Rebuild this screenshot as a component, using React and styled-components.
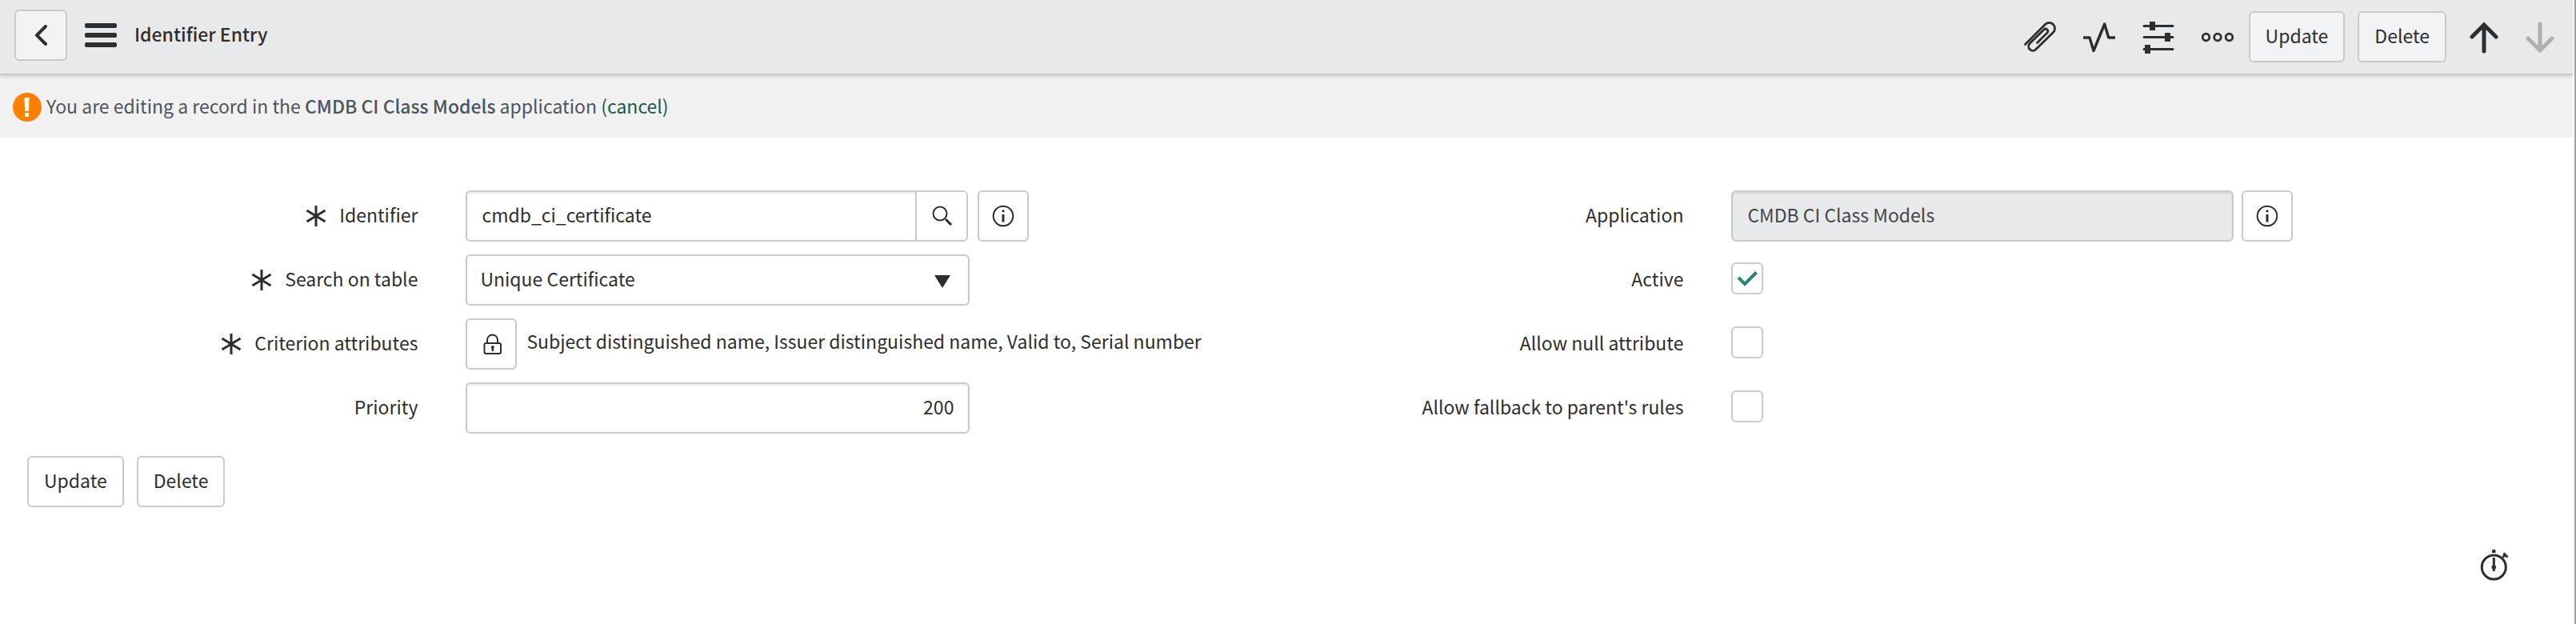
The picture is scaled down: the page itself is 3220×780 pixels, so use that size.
import React from 'react';
import styled, { createGlobalStyle, css } from 'styled-components';

const Global = createGlobalStyle`
  *, *::before, *::after { box-sizing: border-box; }
  body { margin: 0; background: #fff; }
  body, button, input, select {
    font-family: "Noto Sans CJK SC", "Noto Sans", sans-serif;
    font-size: 23px;
    line-height: 36px;
    color: #2e2e2e;
  }
`;

const Page = styled.div`
  min-height: 100vh;
  display: flex;
  flex-direction: column;
  padding-right: 2px;
  border-right: 2px solid #a3a3a3;
`;

const Header = styled.header`
  display: flex;
  align-items: center;
  height: 94px;
  padding: 0 6px 4px 18px;
  background: #e7e9eb;
  border-bottom: 2px solid #c8c8c8;
  box-shadow: 0 2px 4px rgba(0, 0, 0, 0.12);
  z-index: 1;
`;

const frame = css`
  border: 2px solid #cacaca;
  border-radius: 6px;
  background: #fff;
`;

const Button = styled.button`
  ${frame}
  height: 64px;
  padding: 0 19px 4px;
  background: ${(p) => (p.$tinted ? '#f2f3f5' : '#fff')};
`;

const IconButton = styled(Button)`
  display: flex;
  flex: none;
  align-items: center;
  justify-content: center;
  width: ${(p) => p.$width || 64}px;
  padding: 0;
`;

const BareButton = styled.button`
  display: flex;
  align-items: center;
  justify-content: center;
  width: ${(p) => p.$width || 74}px;
  height: 64px;
  padding: 0;
  border: 0;
  background: none;
  color: inherit;
  opacity: ${(p) => (p.disabled ? 0.3 : 1)};
`;

const Title = styled.h1`
  flex: 1;
  margin: 0;
  padding-bottom: 4px;
  font-size: 23px;
  font-weight: 500;
`;

const Tools = styled.div`
  display: flex;
  align-items: center;
  margin-top: 4px;
`;

const ToolButtons = styled.div`
  display: flex;
  gap: 16px;
  padding: 0 12px 0 2px;
`;

const Notice = styled.div`
  display: flex;
  align-items: center;
  gap: 6px;
  height: 78px;
  padding: 2px 16px 0;
  background: #f1f1f1;
  color: #4d5560;
`;

const NoticeText = styled.p`
  margin: 0;
  padding-bottom: 4px;
  strong { font-weight: 500; }
`;

const Link = styled.a`
  color: #1a5a48;
  text-decoration: none;
`;

const Form = styled.form`
  display: grid;
  grid-template-columns: 1fr 1fr;
  padding: 66px 20px 0 32px;
`;

const Column = styled.div`
  display: flex;
  flex-direction: column;
  gap: 16px;
`;

const Row = styled.div`
  display: grid;
  grid-template-columns: 31% 1fr;
  column-gap: 60px;
  align-items: center;
  min-height: 64px;
`;

const Label = styled.label`
  display: flex;
  align-items: center;
  justify-content: flex-end;
  gap: 16px;
`;

const LabelText = styled.span`
  padding-bottom: 4px;
`;

const ValueText = styled.span`
  padding-bottom: 8px;
`;

const Control = styled.div`
  display: flex;
  align-items: center;
  gap: ${(p) => p.$gap || 12}px;
  width: ${(p) => p.$width || 'auto'};
`;

const Group = styled.div`
  display: flex;
  flex: 1;
`;

const TextInput = styled.input`
  ${frame}
  flex: 1;
  min-width: 0;
  height: 64px;
  padding: 0 18px 4px;
  box-shadow: inset 0 2px 2px rgba(0, 0, 0, 0.08);
  text-align: ${(p) => p.$align || 'left'};
  ${(p) => p.$joined && css`border-radius: 6px 0 0 6px; border-right: 0;`}
  &:disabled { background: #e7e9eb; color: #464646; }
`;

const LookupButton = styled(IconButton)`
  border-radius: 0 6px 6px 0;
`;

const SelectBox = styled.div`
  display: grid;
  flex: 1;
  align-items: center;
  svg { grid-area: 1 / 1; justify-self: end; margin: 4px 24px 0 0; pointer-events: none; }
`;

const Select = styled.select`
  ${frame}
  grid-area: 1 / 1;
  appearance: none;
  width: 100%;
  height: 64px;
  padding: 0 16px 4px;
`;

const CheckBox = styled.span`
  display: grid;
  place-items: center;
  margin-bottom: 4px;
  svg { grid-area: 1 / 1; pointer-events: none; visibility: hidden; }
  input:checked + svg { visibility: visible; }
`;

const CheckInput = styled.input`
  ${frame}
  grid-area: 1 / 1;
  appearance: none;
  width: 40px;
  height: 40px;
  margin: 0;
`;

const Actions = styled.div`
  display: flex;
  gap: 16px;
  padding: 28px 34px 0;
`;

const Footer = styled.footer`
  display: flex;
  justify-content: flex-end;
  padding: 40px 80px 0;
`;

const ink = '#2e2e2e';

const Svg = ({ w, h, sw = 2, children }) => (
  <svg width={w} height={h} viewBox={`0 0 ${w} ${h}`} fill="none" stroke={ink} strokeWidth={sw} aria-hidden="true">{children}</svg>
);

const BackIcon = () => (
  <Svg w={16} h={26} sw={4}><path d="M14 2L3 13l11 11" strokeLinecap="round" strokeLinejoin="round" /></Svg>
);

const MenuIcon = () => (
  <svg width="40" height="30" viewBox="0 0 40 30" fill={ink} aria-hidden="true">
    <rect width="40" height="6" rx="2" /><rect y="12" width="40" height="6" rx="2" /><rect y="24" width="40" height="6" rx="2" />
  </svg>
);

const PaperclipIcon = () => (
  <Svg w={40} h={40} sw={2.8}>
    <path
      d="M1.5 29.5L26.5 4.5a7.07 7.07 0 0 1 10 10L14.8 35.8a5.3 5.3 0 0 1-7.5-7.5L25 11a2.83 2.83 0 0 1 4 4L16.5 27.5"
      strokeLinecap="round"
      strokeLinejoin="round"
    />
  </Svg>
);

const ActivityIcon = () => (
  <Svg w={40} h={40} sw={3.4}><path d="M0 21h8l5 16.5L26.7 4l5 17H40" strokeLinejoin="round" /></Svg>
);

const SlidersIcon = () => (
  <Svg w={40} h={42} sw={3}>
    <path d="M2 7.5h36M2 21.5h36M2 36.5h36" strokeLinecap="round" />
    <path d="M9 2h7v11h-7zM28 16h7v11h-7zM3 31h7v11h-7z" fill={ink} stroke="none" />
  </Svg>
);

const MoreIcon = () => (
  <Svg w={40} h={40} sw={2.8}><circle cx="5.5" cy="20.5" r="4.3" /><circle cx="20" cy="20.5" r="4.3" /><circle cx="34.5" cy="20.5" r="4.3" /></Svg>
);

const UpIcon = () => (
  <Svg w={36} h={42} sw={5}><path d="M18 39V6M3 21L18 6l15 15" strokeLinecap="round" /></Svg>
);

const DownIcon = () => (
  <Svg w={36} h={42} sw={5}><path d="M18 5v33M3 23l15 15 15-15" strokeLinecap="round" /></Svg>
);

const WarningIcon = () => (
  <svg width="36" height="36" viewBox="0 0 36 36" aria-hidden="true">
    <circle cx="18" cy="18" r="18" fill="#ff8000" />
    <path d="M14.5 6h6l-.5 17h-5zM15 25h5v5h-5z" fill="#fff" />
  </svg>
);

const Asterisk = () => (
  <Svg w={26} h={26} sw={3}><path d="M13 0v26M1.5 6l23 14M24.5 6l-23 14" /></Svg>
);

const SearchIcon = () => (
  <Svg w={26} h={26}><circle cx="11" cy="10" r="8.5" /><path d="M18 17l7 7" strokeWidth="3" /></Svg>
);

const InfoIcon = () => (
  <Svg w={28} h={28}>
    <circle cx="14" cy="14" r="12.3" />
    <path d="M14 12v9.5" strokeWidth="3" />
    <circle cx="14" cy="7.8" r="1.6" fill={ink} stroke="none" />
  </Svg>
);

const LockIcon = () => (
  <Svg w={26} h={26}>
    <rect x="4.5" y="12" width="20.5" height="13" rx="2" />
    <path d="M8 12V8a6.5 6.5 0 0 1 13 0v4" />
    <circle cx="14.8" cy="17" r="2" fill={ink} stroke="none" />
    <path d="M14.8 17v5" strokeWidth="2.4" />
  </Svg>
);

const StopwatchIcon = () => (
  <Svg w={36} h={40} sw={3}>
    <circle cx="17.3" cy="23" r="15" />
    <path d="M17.3 11v17" />
    <circle cx="17.3" cy="23" r="2.8" fill={ink} stroke="none" />
    <path d="M15 5V3a2.3 2.3 0 0 1 4.6 0v2z" fill={ink} stroke="none" />
    <path d="M28.5 10.5l3-3M29.5 5.5l5 5" />
  </Svg>
);

const Field = ({ id, label, required, width, gap, children }) => (
  <Row>
    <Label htmlFor={id}>{required && <Asterisk />}<LabelText>{label}</LabelText></Label>
    <Control $width={width} $gap={gap}>{children}</Control>
  </Row>
);

const Check = ({ id, checked }) => (
  <CheckBox>
    <CheckInput type="checkbox" id={id} defaultChecked={checked} />
    <svg width="26" height="20" viewBox="0 0 26 20" fill="none" stroke="#278372" strokeWidth="4" aria-hidden="true"><path d="M2 9l8 8L24.5 2.5" /></svg>
  </CheckBox>
);

export default function App() {
  return (
    <Page>
      <Global />
      <Header>
        <IconButton $tinted $width={66} aria-label="Back"><BackIcon /></IconButton>
        <BareButton $width={84} aria-label="Menu"><MenuIcon /></BareButton>
        <Title>Identifier Entry</Title>
        <Tools>
          <BareButton aria-label="Attachments"><PaperclipIcon /></BareButton>
          <BareButton aria-label="Activity"><ActivityIcon /></BareButton>
          <BareButton aria-label="Personalize form"><SlidersIcon /></BareButton>
          <BareButton aria-label="More options"><MoreIcon /></BareButton>
          <ToolButtons>
            <Button $tinted form="entry">Update</Button>
            <Button $tinted type="button">Delete</Button>
          </ToolButtons>
          <BareButton $width={70} aria-label="Previous record"><UpIcon /></BareButton>
          <BareButton $width={70} aria-label="Next record" disabled><DownIcon /></BareButton>
        </Tools>
      </Header>
      <Notice role="status">
        <WarningIcon />
        <NoticeText>
          You are editing a record in the <strong>CMDB CI Class Models</strong> application <Link href="#cancel">(cancel)</Link>
        </NoticeText>
      </Notice>
      <Form id="entry" onSubmit={(e) => e.preventDefault()}>
        <Column>
          <Field id="identifier" label="Identifier" required width="704px">
            <Group>
              <TextInput id="identifier" $joined defaultValue="cmdb_ci_certificate" />
              <LookupButton type="button" $width={66} aria-label="Look up"><SearchIcon /></LookupButton>
            </Group>
            <IconButton type="button" aria-label="Preview identifier"><InfoIcon /></IconButton>
          </Field>
          <Field id="table" label="Search on table" required width="630px">
            <SelectBox>
              <Select id="table"><option>Unique Certificate</option></Select>
              <svg width="20" height="16" viewBox="0 0 20 16" aria-hidden="true"><path d="M0 0h20L10 16z" fill={ink} /></svg>
            </SelectBox>
          </Field>
          <Field id="criteria" label="Criterion attributes" required>
            <IconButton type="button" id="criteria"><LockIcon /></IconButton>
            <ValueText>Subject distinguished name, Issuer distinguished name, Valid to, Serial number</ValueText>
          </Field>
          <Field id="priority" label="Priority" width="630px">
            <TextInput id="priority" $align="right" defaultValue="200" />
          </Field>
        </Column>
        <Column>
          <Field id="application" label="Application" width="702px" gap={10}>
            <TextInput id="application" disabled defaultValue="CMDB CI Class Models" />
            <IconButton type="button" aria-label="Preview application"><InfoIcon /></IconButton>
          </Field>
          <Field id="active" label="Active"><Check id="active" checked /></Field>
          <Field id="nulls" label="Allow null attribute"><Check id="nulls" /></Field>
          <Field id="fallback" label="Allow fallback to parent's rules"><Check id="fallback" /></Field>
        </Column>
      </Form>
      <Actions>
        <Button form="entry">Update</Button>
        <Button type="button">Delete</Button>
      </Actions>
      <Footer>
        <BareButton $width={36} aria-label="Response time"><StopwatchIcon /></BareButton>
      </Footer>
    </Page>
  );
}
